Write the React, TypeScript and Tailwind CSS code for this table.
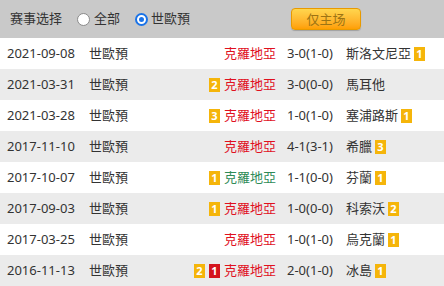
import React from "react";

type Side = { name: string; color?: "red" | "green" | "dark"; badges?: { n: number; red?: boolean }[] };

interface Match {
  date: string;
  comp: string;
  home: Side;
  score: string;
  away: Side;
}

const matches: Match[] = [
  { date: "2021-09-08", comp: "世歐預", home: { name: "克羅地亞", color: "red" }, score: "3-0(1-0)", away: { name: "斯洛文尼亞", badges: [{ n: 1 }] } },
  { date: "2021-03-31", comp: "世歐預", home: { name: "克羅地亞", color: "red", badges: [{ n: 2 }] }, score: "3-0(0-0)", away: { name: "馬耳他" } },
  { date: "2021-03-28", comp: "世歐預", home: { name: "克羅地亞", color: "red", badges: [{ n: 3 }] }, score: "1-0(1-0)", away: { name: "塞浦路斯", badges: [{ n: 1 }] } },
  { date: "2017-11-10", comp: "世歐預", home: { name: "克羅地亞", color: "red" }, score: "4-1(3-1)", away: { name: "希臘", badges: [{ n: 3 }] } },
  { date: "2017-10-07", comp: "世歐預", home: { name: "克羅地亞", color: "green", badges: [{ n: 1 }] }, score: "1-1(0-0)", away: { name: "芬蘭", badges: [{ n: 1 }] } },
  { date: "2017-09-03", comp: "世歐預", home: { name: "克羅地亞", color: "red", badges: [{ n: 1 }] }, score: "1-0(0-0)", away: { name: "科索沃", badges: [{ n: 2 }] } },
  { date: "2017-03-25", comp: "世歐預", home: { name: "克羅地亞", color: "red" }, score: "1-0(1-0)", away: { name: "烏克蘭", badges: [{ n: 1 }] } },
  { date: "2016-11-13", comp: "世歐預", home: { name: "克羅地亞", color: "red", badges: [{ n: 2 }, { n: 1, red: true }] }, score: "2-0(1-0)", away: { name: "冰島", badges: [{ n: 1 }] } },
];

function Badge({ n, red }: { n: number; red?: boolean }) {
  return (
    <span
      className={
        "inline-flex w-[11px] h-[14px] items-center justify-center text-[11px] font-bold leading-none text-white " +
        (red ? "bg-[#d4151e]" : "bg-[#f5b50a]")
      }
    >
      {n}
    </span>
  );
}

function Radio({ checked }: { checked?: boolean }) {
  return checked ? (
    <span className="inline-flex w-[13px] h-[13px] rounded-full bg-[#1a73e8] items-center justify-center">
      <span className="w-[9px] h-[9px] rounded-full border-2 border-white bg-[#1a73e8]" />
    </span>
  ) : (
    <span className="inline-block w-[13px] h-[13px] rounded-full bg-white border border-[#8a8a8a]" />
  );
}

export default function App() {
  return (
    <div
      className="w-[444px] h-[286px] overflow-hidden bg-white text-[13px] text-[#333]"
      style={{ fontFamily: '"Noto Sans", "Noto Sans CJK SC", sans-serif' }}
    >
      {/* filter bar */}
      <div className="h-[38px] bg-[#c9c9c9] flex items-center pl-[10px]">
        <span>赛事选择</span>
        <label className="flex items-center ml-[15px] gap-[4px]">
          <Radio />
          <span>全部</span>
        </label>
        <label className="flex items-center ml-[15px] gap-[3px]">
          <Radio checked />
          <span>世歐預</span>
        </label>
        <button className="ml-[101px] w-[70px] h-[22px] rounded-[4px] border border-[#e89a00] bg-gradient-to-b from-[#ffd64d] to-[#ff9f00] text-[#9c7414] text-[13px] leading-none shadow-[0_1px_1px_rgba(0,0,0,0.2)]">
          仅主场
        </button>
      </div>

      {matches.map((m, i) => (
        <div
          key={i}
          className={
            "h-[31px] flex items-center pl-[7px] whitespace-nowrap " + (i % 2 === 1 ? "bg-[#ebebeb]" : "bg-white")
          }
        >
          <span className="w-[82px]">{m.date}</span>
          <span className="w-[60px]">{m.comp}</span>
          <span className="w-[127px] flex items-center justify-end gap-[4px]">
            {m.home.badges?.map((b, j) => (
              <Badge key={j} n={b.n} red={b.red} />
            ))}
            <span className={m.home.color === "green" ? "text-[#2e8b57]" : "text-[#e0101e]"}>{m.home.name}</span>
          </span>
          <span className="w-[59px] ml-[11px]">{m.score}</span>
          <span className="flex items-center gap-[3px]">
            <span>{m.away.name}</span>
            {m.away.badges?.map((b, j) => (
              <Badge key={j} n={b.n} red={b.red} />
            ))}
          </span>
        </div>
      ))}
    </div>
  );
}
